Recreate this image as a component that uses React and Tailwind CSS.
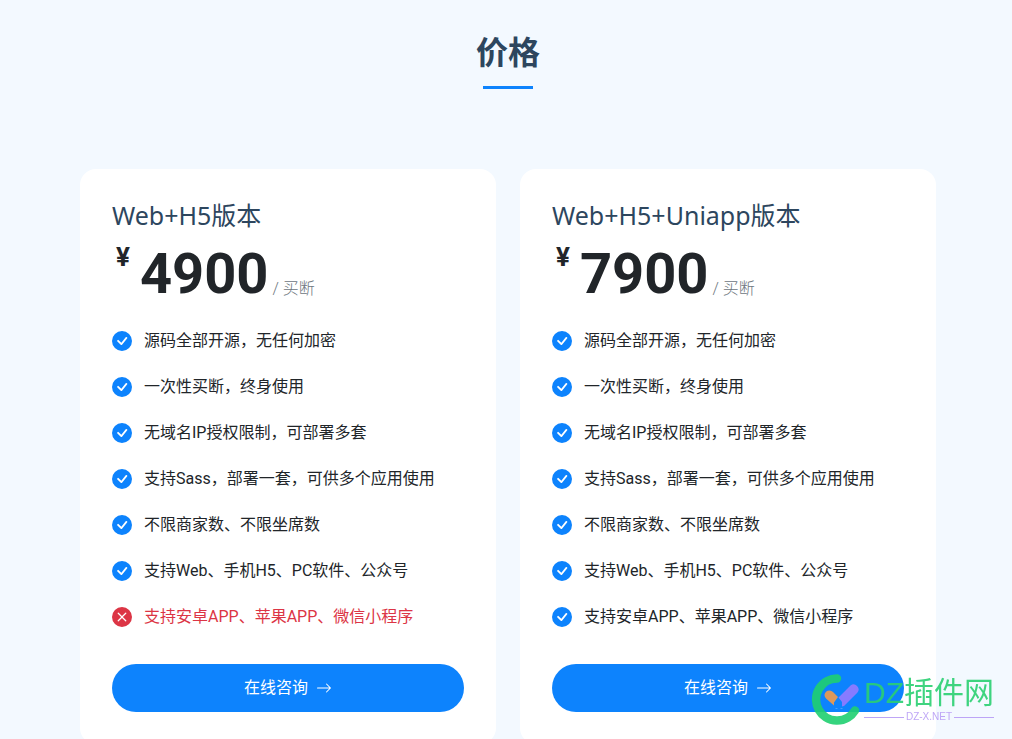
import { BsArrowRight, BsCheckCircleFill, BsXCircleFill } from "react-icons/bs";

const FEATURES = [
  "源码全部开源，无任何加密",
  "一次性买断，终身使用",
  "无域名IP授权限制，可部署多套",
  "支持Sass，部署一套，可供多个应用使用",
  "不限商家数、不限坐席数",
  "支持Web、手机H5、PC软件、公众号",
  "支持安卓APP、苹果APP、微信小程序",
];

const PLANS = [
  { name: "Web+H5版本", price: "4900", missing: [6] },
  { name: "Web+H5+Uniapp版本", price: "7900", missing: [] },
];

function Feature({ text, missing }) {
  const Icon = missing ? BsXCircleFill : BsCheckCircleFill;
  return (
    <li className={missing ? "flex items-center gap-3 text-[#dc3545]" : "flex items-center gap-3"}>
      <Icon
        aria-hidden="true"
        className={missing ? "size-5 shrink-0 text-[#dc3545]" : "size-5 shrink-0 text-[#0d83fd]"}
      />
      <span>{text}</span>
    </li>
  );
}

function PlanCard({ plan }) {
  return (
    <article className="rounded-2xl bg-white p-8">
      <h3 className="font-['Noto_Sans','Noto_Sans_CJK_SC',sans-serif] text-[25px] leading-7 text-[#2d465e]">
        {plan.name}
      </h3>
      <p className="flex items-end">
        <span className="self-start pt-4 pl-1 text-[26px] font-bold">¥</span>
        <span className="ml-[10px] text-[56px] leading-[90px] font-bold">{plan.price}</span>
        <span className="ml-1 pb-[18px] font-light text-[#6c757d]">/ 买断</span>
      </p>
      <ul className="mt-[10px] flex flex-col gap-[22px]">
        {FEATURES.map((text, i) => (
          <Feature key={text} text={text} missing={plan.missing.includes(i)} />
        ))}
      </ul>
      <a
        href="#contact"
        className="mt-[35px] flex h-12 items-center justify-center gap-2 rounded-full bg-[#0d83fd] text-white"
      >
        在线咨询
        <BsArrowRight aria-hidden="true" className="size-4" />
      </a>
    </article>
  );
}

function Watermark() {
  return (
    <div className="pointer-events-none fixed right-[18px] bottom-[14px] flex items-center gap-1 font-['Liberation_Sans','Noto_Sans_CJK_SC',sans-serif] opacity-90">
      <svg viewBox="0 0 50 52" className="h-[52px] w-[50px]" aria-hidden="true">
        <path d="M27 5.5A21 21 0 1 0 45 37.5" fill="none" stroke="#20d070" strokeWidth="8.5" strokeLinecap="round" />
        <path d="M16 18.8A5 5 0 0 1 23 19L28 24L24 29.5V32.5L16 25.5A5 5 0 0 1 16 18.8Z" fill="#f29b4a" />
        <path d="M28.5 24.5L40.5 12.5A5 5 0 0 1 47.5 19.5L34 33L32 33.5V29Z" fill="#957bff" />
        <path d="M25.5 35.5h2M30.5 35.5h2" stroke="#4aa3ff" />
      </svg>
      <div className="flex flex-col">
        <span className="text-[30px] leading-9 text-[#2bd072]">DZ插件网</span>
        <span className="flex items-center gap-[2px] text-[10px] leading-3 text-[#b79cf5]">
          <span className="h-px grow bg-[#b79cf5]" />
          DZ-X.NET
          <span className="h-px grow bg-[#b79cf5]" />
        </span>
      </div>
    </div>
  );
}

export default function App() {
  return (
    <main className="min-h-screen bg-[#f3f9ff] pr-[76px] pl-20 font-[Roboto,'Noto_Sans_CJK_SC',sans-serif] text-base leading-6 text-[#212529]">
      <header className="flex flex-col items-center pt-[33px]">
        <h2 className="text-[32px] leading-10 font-bold text-[#2d465e]">价格</h2>
        <div className="mt-[13px] h-[3px] w-[50px] bg-[#0d83fd]" />
      </header>
      <section className="mt-20 grid grid-cols-2 gap-6">
        {PLANS.map((plan) => (
          <PlanCard key={plan.name} plan={plan} />
        ))}
      </section>
      <Watermark />
    </main>
  );
}
